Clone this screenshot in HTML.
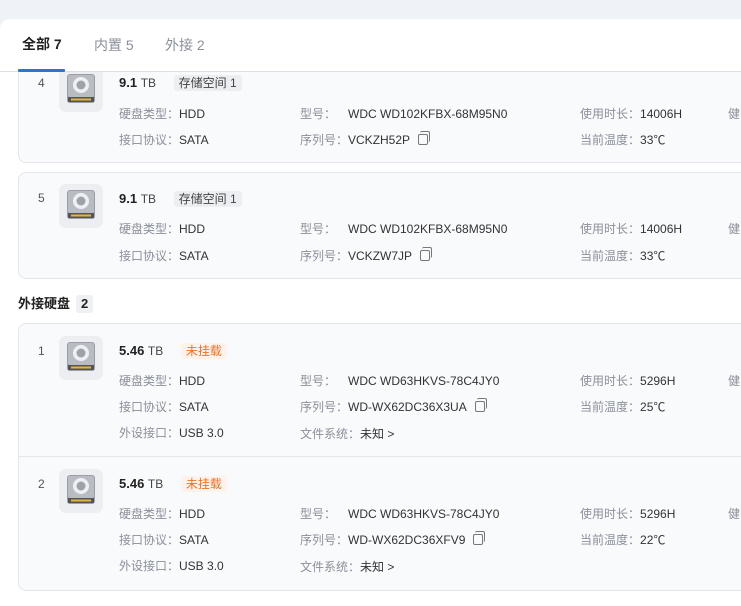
<!DOCTYPE html>
<html><head><meta charset="utf-8"><style>
*{margin:0;padding:0;box-sizing:border-box}
body{width:741px;height:606px;overflow:hidden;background:#fff;font-family:"Liberation Sans","Noto Sans CJK SC",sans-serif;font-size:12px;color:#333;position:relative}
.top{position:absolute;left:0;top:0;width:741px;height:30px;background:#eff2f7}
.tab{position:absolute;top:17px;font-size:14px;color:#8a8f99;line-height:18px}
.tab.a{color:#222;font-weight:bold}
.ul{position:absolute;left:18px;top:50px;width:47px;height:3px;background:#2f6fe0;border-radius:1px}
.card{position:absolute;left:18px;width:760px;background:#f9fafc;border:1px solid #e3e6eb;border-radius:8px}
.a{position:absolute;white-space:nowrap;line-height:17px}
.num{left:19px;color:#555}
.ic{position:absolute;left:40px;width:44px;height:44px;background:#eceef1;border-radius:7px}
.t{left:100px;font-size:13px;font-weight:bold;color:#222}
.t span{font-weight:normal;font-size:12px;color:#444}
.tag{padding:1px 5px;border-radius:3px;background:#eceef2;color:#444;font-size:12px}
.tag.o{background:#fdf2ec;color:#e8742a}
.l{color:#8a8f99}
.v{color:#333}
.sec{position:absolute;left:18px;font-size:13px;font-weight:bold;color:#222;line-height:18px}
.sec span{display:inline-block;margin-left:6px;background:#eef0f3;padding:0 5px;border-radius:3px}
.cp{display:inline-block;width:10px;height:11px;border:1.3px solid #777;border-radius:2px;margin-left:8px;vertical-align:-1px;position:relative}
.cp:before{content:"";position:absolute;left:1px;top:-4px;width:9px;height:10px;border-top:1.3px solid #777;border-right:1.3px solid #777;border-radius:2px}
</style></head><body>
<div class="top"></div>

<svg width="0" height="0" style="position:absolute"><defs>
<g id="hd"><rect x="8" y="6" width="28" height="29" rx="3" fill="#9a9ea6"/><rect x="9" y="7" width="26" height="22" rx="2" fill="#b9bcc3"/><circle cx="22" cy="17" r="8" fill="#eef0f3"/><circle cx="22" cy="17" r="4.5" fill="#9ea2a9"/><rect x="9" y="29" width="26" height="5" fill="#555"/><rect x="12" y="30.5" width="20" height="2" fill="#e5b53a"/></g>
</defs></svg>

<!-- card 4 -->
<div class="card" style="top:56px;height:107px;z-index:1">
<div class="ic" style="top:11px"><svg width="44" height="44"><use href="#hd"/></svg></div>
<div class="a num" style="top:18px">4</div>
<div class="a t" style="top:17px">9.1 <span>TB</span> <span class="tag" style="margin-left:14px">存储空间 1</span></div>
<div class="a l" style="left:100px;top:49px">硬盘类型：<span class="v">HDD</span></div>
<div class="a l" style="left:281px;top:49px">型号：</div><div class="a v" style="left:329px;top:49px">WDC WD102KFBX-68M95N0</div>
<div class="a l" style="left:561px;top:49px">使用时长：<span class="v">14006H</span></div>
<div class="a l" style="left:709px;top:49px">健</div>
<div class="a l" style="left:100px;top:75px">接口协议：<span class="v">SATA</span></div>
<div class="a l" style="left:281px;top:75px">序列号：<span class="v">VCKZH52P</span><span class="cp"></span></div>
<div class="a l" style="left:561px;top:75px">当前温度：<span class="v">33℃</span></div>
</div>
<div style="position:absolute;left:0;top:19px;width:741px;height:53px;background:#fff;border-bottom:1px solid #dcdfe5;z-index:3;border-radius:10px 0 0 0">
<div class="tab a" style="left:22px">全部 7</div>
<div class="tab" style="left:94px">内置 5</div>
<div class="tab" style="left:165px">外接 2</div>
<div class="ul"></div>
</div>

<!-- card 5 -->
<div class="card" style="top:172px;height:107px">
<div class="ic" style="top:11px"><svg width="44" height="44"><use href="#hd"/></svg></div>
<div class="a num" style="top:17px">5</div>
<div class="a t" style="top:17px">9.1 <span>TB</span> <span class="tag" style="margin-left:14px">存储空间 1</span></div>
<div class="a l" style="left:100px;top:48px">硬盘类型：<span class="v">HDD</span></div>
<div class="a l" style="left:281px;top:48px">型号：</div><div class="a v" style="left:329px;top:48px">WDC WD102KFBX-68M95N0</div>
<div class="a l" style="left:561px;top:48px">使用时长：<span class="v">14006H</span></div>
<div class="a l" style="left:709px;top:48px">健</div>
<div class="a l" style="left:100px;top:75px">接口协议：<span class="v">SATA</span></div>
<div class="a l" style="left:281px;top:75px">序列号：<span class="v">VCKZW7JP</span><span class="cp"></span></div>
<div class="a l" style="left:561px;top:75px">当前温度：<span class="v">33℃</span></div>
</div>

<div class="sec" style="top:295px">外接硬盘<span>2</span></div>

<div class="card" style="top:323px;height:268px">
<div class="ic" style="top:12px"><svg width="44" height="44"><use href="#hd"/></svg></div>
<div class="a num" style="top:19px">1</div>
<div class="a t" style="top:18px">5.46 <span>TB</span> <span class="tag o" style="margin-left:14px">未挂载</span></div>
<div class="a l" style="left:100px;top:49px">硬盘类型：<span class="v">HDD</span></div>
<div class="a l" style="left:281px;top:49px">型号：</div><div class="a v" style="left:329px;top:49px">WDC WD63HKVS-78C4JY0</div>
<div class="a l" style="left:561px;top:49px">使用时长：<span class="v">5296H</span></div>
<div class="a l" style="left:709px;top:49px">健</div>
<div class="a l" style="left:100px;top:75px">接口协议：<span class="v">SATA</span></div>
<div class="a l" style="left:281px;top:75px">序列号：<span class="v">WD-WX62DC36X3UA</span><span class="cp"></span></div>
<div class="a l" style="left:561px;top:75px">当前温度：<span class="v">25℃</span></div>
<div class="a l" style="left:100px;top:101px">外设接口：<span class="v">USB 3.0</span></div>
<div class="a l" style="left:281px;top:102px">文件系统：<span class="v">未知 &gt;</span></div>
<div style="position:absolute;left:0;top:132px;width:760px;border-top:1px solid #e3e6eb"></div>
<div class="ic" style="top:145px"><svg width="44" height="44"><use href="#hd"/></svg></div>
<div class="a num" style="top:152px">2</div>
<div class="a t" style="top:151px">5.46 <span>TB</span> <span class="tag o" style="margin-left:14px">未挂载</span></div>
<div class="a l" style="left:100px;top:182px">硬盘类型：<span class="v">HDD</span></div>
<div class="a l" style="left:281px;top:182px">型号：</div><div class="a v" style="left:329px;top:182px">WDC WD63HKVS-78C4JY0</div>
<div class="a l" style="left:561px;top:182px">使用时长：<span class="v">5296H</span></div>
<div class="a l" style="left:709px;top:182px">健</div>
<div class="a l" style="left:100px;top:208px">接口协议：<span class="v">SATA</span></div>
<div class="a l" style="left:281px;top:208px">序列号：<span class="v">WD-WX62DC36XFV9</span><span class="cp"></span></div>
<div class="a l" style="left:561px;top:208px">当前温度：<span class="v">22℃</span></div>
<div class="a l" style="left:100px;top:234px">外设接口：<span class="v">USB 3.0</span></div>
<div class="a l" style="left:281px;top:235px">文件系统：<span class="v">未知 &gt;</span></div>
</div>
</body></html>
